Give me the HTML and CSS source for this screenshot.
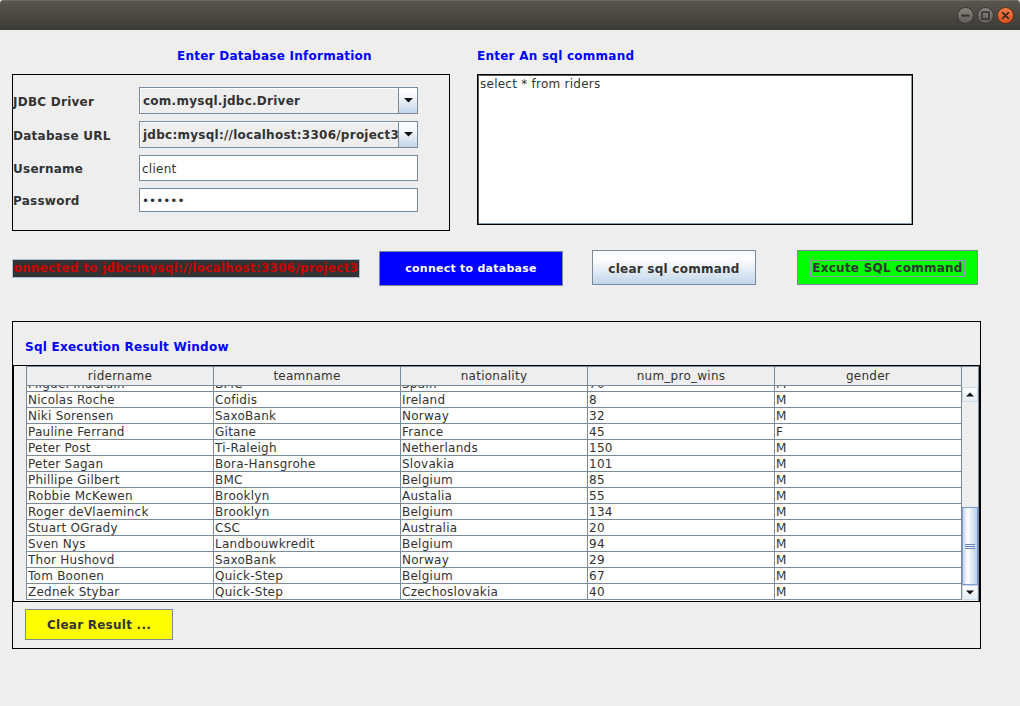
FILE: index.html
```html
<!DOCTYPE html>
<html>
<head>
<meta charset="utf-8">
<title>Database Client</title>
<link rel="stylesheet" href="styles.css">
</head>
<body>
<div class="window">
  <div class="titlebar">
    <div class="wctl">
      <span class="wbtn"><svg width="17" height="17" viewBox="0 0 17 17"><defs><linearGradient id="gg" x1="0" y1="0" x2="0" y2="1"><stop offset="0" stop-color="#8a8781"/><stop offset="1" stop-color="#5e5c57"/></linearGradient></defs><circle cx="8.5" cy="8.5" r="8" fill="url(#gg)" stroke="#34332f" stroke-width="1"/><rect x="4.5" y="7.6" width="8" height="2" fill="#33322e"/></svg></span>
      <span class="wbtn"><svg width="17" height="17" viewBox="0 0 17 17"><circle cx="8.5" cy="8.5" r="8" fill="url(#gg)" stroke="#34332f" stroke-width="1"/><rect x="5" y="5" width="7" height="7" fill="none" stroke="#33322e" stroke-width="1.5"/></svg></span>
      <span class="wbtn"><svg width="17" height="17" viewBox="0 0 17 17"><defs><linearGradient id="go" x1="0" y1="0" x2="0" y2="1"><stop offset="0" stop-color="#f7814a"/><stop offset="1" stop-color="#d9501c"/></linearGradient></defs><circle cx="8.5" cy="8.5" r="8" fill="url(#go)" stroke="#5a2a14" stroke-width="1"/><path d="M5.6 5.6 L11.4 11.4 M11.4 5.6 L5.6 11.4" stroke="#3a2a22" stroke-width="1.8" stroke-linecap="round"/></svg></span>
    </div>
  </div>

  <div class="content">
    <div class="top">
      <div class="dbcol">
        <div class="heading db-heading">Enter Database Information</div>
        <div class="dbbox">
          <div class="lbl">JDBC Driver</div>
          <div class="combo"><span class="combo-text">com.mysql.jdbc.Driver</span><span class="combo-arrow"><svg width="9" height="5" viewBox="0 0 9 5"><polygon points="0,0 9,0 4.5,4.5" fill="#111"/></svg></span></div>
          <div class="lbl">Database URL</div>
          <div class="combo"><span class="combo-text">jdbc:mysql://localhost:3306/project3</span><span class="combo-arrow"><svg width="9" height="5" viewBox="0 0 9 5"><polygon points="0,0 9,0 4.5,4.5" fill="#111"/></svg></span></div>
          <div class="lbl">Username</div>
          <div class="tf tf-user">client</div>
          <div class="lbl">Password</div>
          <div class="tf tf-pass">••••••</div>
        </div>
      </div>
      <div class="sqlcol">
        <div class="heading">Enter An sql command</div>
        <div class="sqlarea">select * from riders</div>
      </div>
    </div>

    <div class="actions">
      <div class="status"><span class="status-text">connected to jdbc:mysql://localhost:3306/project3</span></div>
      <div class="btn btn-connect">connect to database</div>
      <div class="btn btn-clear">clear sql command</div>
      <div class="btn btn-exec"><span class="focus">Excute SQL command</span></div>
    </div>

    <div class="result">
      <div class="result-title">Sql Execution Result Window</div>
      <div class="scrollpane">
        <div class="thead">
          <div class="th">ridername</div>
          <div class="th">teamname</div>
          <div class="th">nationality</div>
          <div class="th">num_pro_wins</div>
          <div class="th">gender</div>
          <div class="corner"></div>
        </div>
        <div class="viewport">
          <div class="tbody-clip">
            <div class="tbody">
              <div class="tr"><div class="td">Miguel Indurain</div><div class="td">BMC</div><div class="td">Spain</div><div class="td">70</div><div class="td">M</div></div>
              <div class="tr"><div class="td">Nicolas Roche</div><div class="td">Cofidis</div><div class="td">Ireland</div><div class="td">8</div><div class="td">M</div></div>
              <div class="tr"><div class="td">Niki Sorensen</div><div class="td">SaxoBank</div><div class="td">Norway</div><div class="td">32</div><div class="td">M</div></div>
              <div class="tr"><div class="td">Pauline Ferrand</div><div class="td">Gitane</div><div class="td">France</div><div class="td">45</div><div class="td">F</div></div>
              <div class="tr"><div class="td">Peter Post</div><div class="td">Ti-Raleigh</div><div class="td">Netherlands</div><div class="td">150</div><div class="td">M</div></div>
              <div class="tr"><div class="td">Peter Sagan</div><div class="td">Bora-Hansgrohe</div><div class="td">Slovakia</div><div class="td">101</div><div class="td">M</div></div>
              <div class="tr"><div class="td">Phillipe Gilbert</div><div class="td">BMC</div><div class="td">Belgium</div><div class="td">85</div><div class="td">M</div></div>
              <div class="tr"><div class="td">Robbie McKewen</div><div class="td">Brooklyn</div><div class="td">Austalia</div><div class="td">55</div><div class="td">M</div></div>
              <div class="tr"><div class="td">Roger deVlaeminck</div><div class="td">Brooklyn</div><div class="td">Belgium</div><div class="td">134</div><div class="td">M</div></div>
              <div class="tr"><div class="td">Stuart OGrady</div><div class="td">CSC</div><div class="td">Australia</div><div class="td">20</div><div class="td">M</div></div>
              <div class="tr"><div class="td">Sven Nys</div><div class="td">Landbouwkredit</div><div class="td">Belgium</div><div class="td">94</div><div class="td">M</div></div>
              <div class="tr"><div class="td">Thor Hushovd</div><div class="td">SaxoBank</div><div class="td">Norway</div><div class="td">29</div><div class="td">M</div></div>
              <div class="tr"><div class="td">Tom Boonen</div><div class="td">Quick-Step</div><div class="td">Belgium</div><div class="td">67</div><div class="td">M</div></div>
              <div class="tr"><div class="td">Zednek Stybar</div><div class="td">Quick-Step</div><div class="td">Czechoslovakia</div><div class="td">40</div><div class="td">M</div></div>
            </div>
          </div>
          <div class="vscroll">
            <div class="sb-btn"><svg width="8" height="5" viewBox="0 0 8 5"><polygon points="4,0.5 8,4.5 0,4.5" fill="#111"/></svg></div>
            <div class="sb-track">
              <div class="sb-thumb"><svg width="10" height="5" viewBox="0 0 10 5"><rect x="0" y="0" width="10" height="1" fill="#6b87be"/><rect x="0" y="2" width="10" height="1" fill="#6b87be"/><rect x="0" y="4" width="10" height="1" fill="#6b87be"/></svg></div>
            </div>
            <div class="sb-btn"><svg width="8" height="5" viewBox="0 0 8 5"><polygon points="0,0.5 8,0.5 4,4.5" fill="#111"/></svg></div>
          </div>
        </div>
      </div>
      <div class="btn btn-clear-result">Clear Result ...</div>
    </div>
  </div>
</div>
</body>
</html>
```

FILE: styles.css
```css
html, body {
  margin: 0;
  padding: 0;
  background: #eeeeee;
}
body {
  width: 1020px;
  height: 706px;
  overflow: hidden;
  font-family: "DejaVu Sans", "Liberation Sans", sans-serif;
  font-size: 12px;
  letter-spacing: 0.25px;
  color: #333333;
}
.window {
  width: 1020px;
  height: 706px;
  background: #eeeeee;
}
.titlebar {
  height: 30px;
  box-sizing: border-box;
  background: linear-gradient(#5a5751, #3d3b36);
  border-radius: 4px 4px 0 0;
  box-shadow: inset 0 1px 0 #6e6a62;
  display: flex;
  justify-content: flex-end;
  align-items: center;
  padding-right: 6px;
}
.wctl {
  display: flex;
  gap: 3px;
  margin-top: 1px;
}
.wbtn {
  width: 17px;
  height: 17px;
  display: block;
}
.wbtn svg { display: block; }

.content {
  padding: 18px 0 0 12px;
}
.top {
  display: flex;
  align-items: flex-start;
  gap: 27px;
}
.dbcol { width: 438px; }
.sqlcol { width: 436px; }
.heading {
  font-weight: bold;
  color: #0000ff;
  line-height: 15px;
  height: 15px;
  padding-top: 1px;
  margin-bottom: 10px;
  white-space: nowrap;
}
.db-heading { padding-left: 165px; }

.dbbox {
  border: 1px solid #000;
  padding: 12px 31px 18px 0;
  display: grid;
  grid-template-columns: 126px 279px;
  grid-template-rows: 27px 27px 26px 24px;
  row-gap: 7px;
  align-items: center;
}
.lbl {
  font-weight: bold;
  white-space: nowrap;
  padding-top: 2px;
}
.combo {
  height: 27px;
  box-sizing: border-box;
  border: 1px solid #7a8a99;
  background: #eeeeee;
  box-shadow: inset 1px 1px 0 #ffffff;
  display: flex;
}
.combo-text {
  flex: 1;
  min-width: 0;
  overflow: hidden;
  white-space: nowrap;
  font-weight: bold;
  line-height: 23px;
  padding-top: 2px;
  padding-left: 3px;
}
.combo-arrow {
  width: 18px;
  border-left: 1px solid #7a8a99;
  background: linear-gradient(#ffffff, #f4f7fb 35%, #c3d5e8);
  display: flex;
  align-items: center;
  justify-content: center;
}
.combo-arrow svg { display: block; margin-left: 1px; }
.tf {
  box-sizing: border-box;
  border: 1px solid #7a8a99;
  background: #ffffff;
  padding-left: 2px;
  padding-top: 2px;
  white-space: nowrap;
}
.tf-user {
  height: 26px;
  line-height: 22px;
}
.tf-pass {
  height: 24px;
  line-height: 20px;
  letter-spacing: 0;
}

.sqlarea {
  box-sizing: border-box;
  height: 151px;
  border: 1px solid #000;
  background: #fff;
  box-shadow: inset 1px 1px 0 #555, inset -1px -1px 0 #8a9aaa;
  padding: 2px 2px;
  line-height: 15px;
}

.actions {
  display: flex;
  align-items: flex-start;
  margin-top: 19px;
  height: 35px;
}
.status {
  width: 348px;
  height: 19px;
  box-sizing: border-box;
  margin-top: 9px;
  background: #333333;
  border: 1px solid #a8c0d8;
  display: flex;
  justify-content: flex-end;
  overflow: hidden;
  padding-right: 1px;
}
.status-text {
  flex: none;
  white-space: nowrap;
  color: #cc0000;
  font-weight: bold;
  line-height: 17px;
}
.btn {
  box-sizing: border-box;
  height: 35px;
  border: 1px solid #7a8a99;
  display: flex;
  align-items: center;
  justify-content: center;
  font-weight: bold;
  white-space: nowrap;
}
.btn-connect {
  margin-left: 19px;
  margin-top: 1px;
  width: 184px;
  background: #0000ff;
  color: #ffffff;
  font-size: 11px;
}
.btn-clear {
  margin-left: 29px;
  width: 164px;
  padding-top: 2px;
  background: linear-gradient(#f3f7fb, #ffffff 20%, #eef3f9 45%, #c2d5e9);
}
.btn-exec {
  margin-left: 41px;
  width: 181px;
  padding-top: 2px;
  background: #00ff00;
}
.focus {
  border: 1px solid #8a9aaa;
  padding: 0 1px;
  line-height: 15px;
}

.result {
  margin-top: 36px;
  width: 969px;
  box-sizing: border-box;
  border: 1px solid #000;
  padding: 18px 0 8px 0;
}
.result-title {
  font-weight: bold;
  color: #0000ff;
  line-height: 15px;
  padding-left: 12px;
  margin-bottom: 10px;
}
.scrollpane {
  border: 1px solid #000;
  padding-left: 12px;
  background: #eeeeee;
}
.thead {
  display: flex;
  height: 20px;
}
.th {
  width: 187px;
  box-sizing: border-box;
  border-left: 1px solid #7a8a99;
  border-top: 1px solid #7a8a99;
  border-bottom: 1px solid #7a8a99;
  background: #eeeeee;
  text-align: center;
  padding-top: 1px;
  line-height: 17px;
  white-space: nowrap;
}
.corner {
  width: 18px;
  box-sizing: border-box;
  border-left: 1px solid #7a8a99;
  border-top: 1px solid #7a8a99;
  border-right: 1px solid #7a8a99;
  background: #eeeeee;
}
.viewport {
  display: flex;
  height: 215px;
}
.tbody-clip {
  width: 936px;
  height: 215px;
  overflow: hidden;
  background: #ffffff;
}
.tbody {
  margin-top: -10px;
}
.tr {
  display: grid;
  grid-template-columns: repeat(5, 187px);
  width: 936px;
  box-sizing: border-box;
  border-right: 1px solid #7a8a99;
}
.td {
  box-sizing: border-box;
  height: 16px;
  border-left: 1px solid #7a8a99;
  border-bottom: 1px solid #7a8a99;
  padding: 1px 1px 0 1px;
  line-height: 14px;
  white-space: nowrap;
  overflow: hidden;
}
.vscroll {
  width: 17px;
  box-sizing: border-box;
  border-right: 1px solid #7a8a99;
  padding-top: 1px;
  padding-bottom: 1px;
  display: flex;
  flex-direction: column;
  background: #eeeeee;
}
.sb-btn {
  height: 15px;
  box-sizing: border-box;
  border: 1px solid #d0dae4;
  background: linear-gradient(#ffffff, #e6edf5);
  display: flex;
  align-items: center;
  justify-content: center;
}
.sb-btn svg { display: block; }
.sb-track {
  flex: 1;
  display: flex;
  flex-direction: column;
  justify-content: flex-end;
}
.sb-thumb {
  height: 78px;
  box-sizing: border-box;
  border: 1px solid #7c9ad2;
  background: linear-gradient(to right, #c6d8ec, #ffffff 35%, #e3ecf6 60%, #b8cfe5);
  display: flex;
  align-items: center;
  justify-content: center;
}
.sb-thumb svg { display: block; }

.btn-clear-result {
  margin-top: 7px;
  margin-left: 12px;
  width: 148px;
  height: 31px;
  background: #ffff00;
}
```
